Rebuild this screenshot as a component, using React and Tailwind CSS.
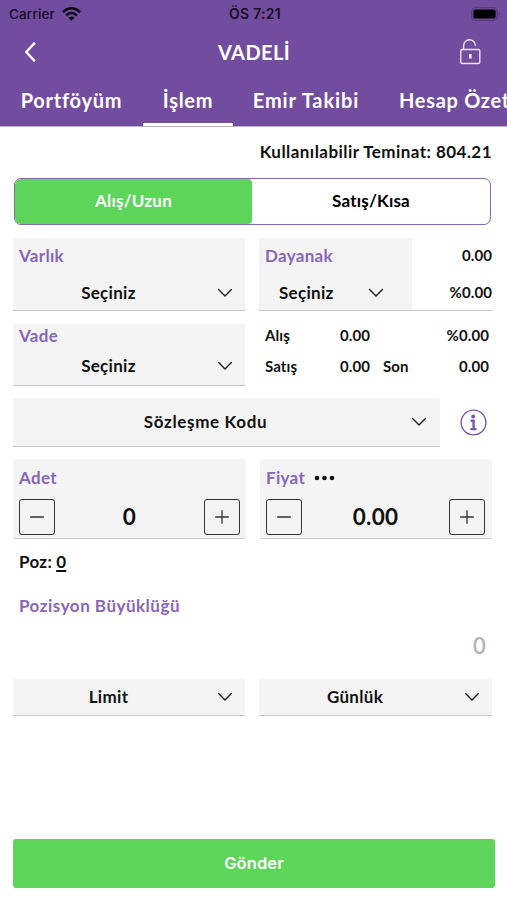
const TABS = [
  { label: 'Portföyüm', box: 'w-[103px] ml-[20px] items-center', tracking: 'tracking-[0.75px]' },
  { label: 'İşlem', box: 'w-[90px] ml-[20px] items-center', tracking: 'tracking-[0.7px]', active: true },
  { label: 'Emir Takibi', box: 'w-[108px] ml-[19px] items-center', tracking: 'tracking-[0.9px]' },
  { label: 'Hesap Özeti', box: 'w-[122px] ml-[39px] items-start', tracking: 'tracking-[0.7px]' },
];

function Chevron({ className = '' }) {
  return (
    <svg className={`h-[10px] w-[16px] shrink-0 ${className}`} viewBox="0 0 16 10" fill="none" stroke="#222" strokeWidth="1.4" strokeLinecap="round" strokeLinejoin="round">
      <path d="M1.6 1.6 8 8.1l6.4-6.5" />
    </svg>
  );
}

function Label({ children, className = '' }) {
  return <div className={`text-[17px] leading-[24px] font-bold whitespace-nowrap text-[#8767b8] ${className}`}>{children}</div>;
}

function Select({ value, className = '' }) {
  return (
    <div className={`flex items-center pr-[12px] ${className}`}>
      <div className="flex-1 pr-[13px] text-center leading-[24px] whitespace-nowrap">{value}</div>
      <Chevron />
    </div>
  );
}

function StepButton({ plus }) {
  return (
    <button className="flex size-[36px] shrink-0 items-center justify-center rounded-[3px] border-[1.5px] border-[#333]">
      <svg className="size-[14px]" viewBox="0 0 14 14" stroke="#333" strokeWidth="1.3" strokeLinecap="round">
        <path d={plus ? 'M.7 7h12.6M7 .7v12.6' : 'M.7 7h12.6'} />
      </svg>
    </button>
  );
}

function Stepper({ label, value, more, className = '' }) {
  return (
    <div className={`flex h-[80px] flex-col rounded-[3px] border-b border-[#c9c9c9] bg-[#f4f4f4] pl-[6px] ${className}`}>
      <div className="flex h-[40px] items-center pb-[2px]">
        <Label>{label}</Label>
        {more && (
          <svg className="ml-[9px] h-[6px] w-[21px]" viewBox="0 0 21 6" fill="#111">
            <circle cx="3" cy="3" r="2.3" />
            <circle cx="10.5" cy="3" r="2.3" />
            <circle cx="18" cy="3" r="2.3" />
          </svg>
        )}
      </div>
      <div className="flex items-center">
        <StepButton />
        <div className="flex-1 text-center text-[22.5px] leading-[28px] font-bold">{value}</div>
        <StepButton plus />
      </div>
    </div>
  );
}

function StatusBar() {
  return (
    <div className="grid h-[28px] grid-cols-3 items-center pr-[6px] pl-[9px] font-['Inter',sans-serif] text-[#180b25]">
      <div className="flex items-center gap-[7px]">
        <span className="text-[13.5px] leading-[18px] font-medium tracking-[0.15px]">Carrier</span>
        <svg className="h-[14px] w-[19px]" viewBox="0 0 19 14" fill="none" stroke="#0d0615" strokeWidth="2.6">
          <path d="M1 5.3C6-.1 13-.1 18 5.3" />
          <path d="M4.2 8.5c3.2-3.3 7.4-3.3 10.6 0" />
          <path d="M9.5 13.8 6.4 10.8c1.8-1.7 4.4-1.7 6.2 0Z" fill="#0d0615" stroke="none" />
        </svg>
      </div>
      <div className="text-center text-[14px] leading-[18px] font-semibold tracking-[0.3px]">ÖS 7:21</div>
      <svg className="h-[14px] w-[30px] justify-self-end" viewBox="0 0 30 14">
        <rect x=".7" y=".7" width="25.6" height="12.6" rx="4" fill="none" stroke="#563b7b" strokeWidth="1.2" />
        <rect x="2.4" y="2.4" width="22.2" height="9.2" rx="2.2" fill="#000" />
        <path d="M27.7 4.8c1.7.8 1.7 3.6 0 4.4Z" fill="#563b7b" />
      </svg>
    </div>
  );
}

export default function App() {
  return (
    <div className="flex h-[900px] w-[507px] flex-col overflow-hidden bg-white font-['Lato',sans-serif] font-bold text-[#111]">
      <header className="h-[127px] shrink-0 border-b border-[#b9b0c4] bg-[#724c9f] text-white">
        <StatusBar />
        <div className="flex h-[48px] items-center justify-between pr-[26px] pl-[24px]">
          <svg className="h-[20px] w-[23px]" viewBox="0 0 23 20" fill="none" stroke="#fff" strokeWidth="2.3" strokeLinecap="round" strokeLinejoin="round">
            <path d="M10.2 1.4 2.3 10l7.9 8.6" />
          </svg>
          <h1 className="pl-[2px] text-[20px] leading-[28px] tracking-[0.4px]">VADELİ</h1>
          <svg className="-mt-[1px] h-[27px] w-[22px]" viewBox="0 0 22 27" fill="none" stroke="#eee2f8" strokeWidth="1.4">
            <rect x="1.8" y="11.5" width="19" height="14" rx="1.2" />
            <path d="M4.6 11.2V8C4.6 4.3 7.4 1.7 10.4 1.7s5.8 2.4 6 6" />
            <path d="M11.3 16v4.6" strokeWidth="2.6" />
          </svg>
        </div>
        <nav className="flex h-[50px] overflow-hidden">
          {TABS.map((t) => (
            <div key={t.label} className={`flex shrink-0 flex-col whitespace-nowrap ${t.box}`}>
              <span className={`pt-[10px] text-[20px] leading-[28px] ${t.tracking}`}>{t.label}</span>
              {t.active && <span className="mt-auto h-[3px] w-full bg-white" />}
            </div>
          ))}
        </nav>
      </header>

      <main className="flex flex-col px-[13px] text-[17px] tracking-[0.3px]">
        <div className="mt-[13px] self-end pr-[2px] leading-[24px] tracking-[0.45px]">Kullanılabilir Teminat: 804.21</div>

        <div className="mt-[14px] ml-[1px] flex h-[47px] w-[477px] overflow-hidden rounded-[7px] border-[1.5px] border-[#8268b0] tracking-[0.2px]">
          <div className="flex w-[237px] items-center justify-center rounded-[4px] bg-[#5dd55b] pb-[2px] text-white">Alış/Uzun</div>
          <div className="flex flex-1 items-center justify-center pb-[2px] text-black">Satış/Kısa</div>
        </div>

        <div className="mt-[13px] flex gap-[14px]">
          <div className="h-[73px] w-[232px] border-b-[1.5px] border-[#c9c9c9] bg-[#f4f4f4]">
            <Label className="pt-[6px] pl-[6px]">Varlık</Label>
            <Select value="Seçiniz" className="mt-[13px]" />
          </div>
          <div className="flex h-[73px] w-[233px] border-b-[1.5px] border-[#c9c9c9]">
            <div className="w-[153px] bg-[#f4f4f4]">
              <Label className="pt-[6px] pl-[6px]">Dayanak</Label>
              <div className="mt-[13px] flex items-center pl-[20px] leading-[24px]">
                <div className="w-[56px] whitespace-nowrap">Seçiniz</div>
                <Chevron className="ml-[33px]" />
              </div>
            </div>
            <div className="flex flex-1 flex-col items-end pt-[5px] text-[15px] leading-[24px] tracking-[0.1px]">
              <span>0.00</span>
              <span className="mt-[13px]">%0.00</span>
            </div>
          </div>
        </div>

        <div className="mt-[13px] flex gap-[14px]">
          <div className="h-[62px] w-[232px] border-b-[1.5px] border-[#c9c9c9] bg-[#f4f4f4]">
            <Label className="pl-[6px]">Vade</Label>
            <Select value="Seçiniz" className="mt-[6px]" />
          </div>
          <div className="-mt-px flex w-[233px] flex-col gap-[7px] pr-[3px] pl-[6px] text-[15px] leading-[24px] tracking-[0.1px]">
            <div className="flex">
              <span className="w-[60px]">Alış</span>
              <span className="w-[45px] text-right">0.00</span>
              <span className="flex-1 text-right">%0.00</span>
            </div>
            <div className="flex">
              <span className="w-[60px]">Satış</span>
              <span className="w-[45px] text-right">0.00</span>
              <span className="ml-[13px]">Son</span>
              <span className="flex-1 text-right">0.00</span>
            </div>
          </div>
        </div>

        <div className="mt-[12px] flex items-center">
          <Select value="Sözleşme Kodu" className="h-[49px] w-[427px] rounded-t-[2px] border-b-[1.5px] border-[#c9c9c9] bg-[#f4f4f4] pr-[13px] tracking-[0.65px]" />
          <svg className="ml-[20px] size-[27px]" viewBox="0 0 27 27" fill="none" stroke="#7c58ad">
            <circle cx="13.5" cy="13.5" r="12.4" strokeWidth="1.4" />
            <circle cx="13.2" cy="7.4" r="2" fill="#7c58ad" stroke="none" />
            <path d="M10.6 11.8h3v8M10.4 20.1h6.2" strokeWidth="2.4" />
          </svg>
        </div>

        <div className="mt-[12px] flex">
          <Stepper label="Adet" value="0" className="w-[233px] pr-[6px]" />
          <Stepper label="Fiyat" value="0.00" more className="ml-[14px] w-[232px] pr-[7px]" />
        </div>

        <div className="mt-[11px] flex gap-[4px] pl-[6px] leading-[24px]">
          <span>Poz:</span>
          <span className="underline decoration-2 underline-offset-2">0</span>
        </div>
        <Label className="mt-[20px] pl-[6px] tracking-[0.5px]">Pozisyon Büyüklüğü</Label>
        <div className="mt-[14px] self-end pr-[8px] text-[22px] leading-[28px] font-semibold text-[#b4b4b4]">0</div>

        <div className="mt-[19px] flex gap-[14px]">
          <Select value="Limit" className="h-[37px] w-[232px] rounded-t-[2px] border-b-[1.5px] border-[#c9c9c9] bg-[#f4f4f4]" />
          <Select value="Günlük" className="h-[37px] w-[233px] rounded-t-[2px] border-b-[1.5px] border-[#c9c9c9] bg-[#f4f4f4]" />
        </div>

        <button className="mt-[123px] flex h-[49px] w-[482px] items-center justify-center rounded-[3px] bg-[#5dd55b] font-['Inter',sans-serif] text-[16.5px] font-semibold tracking-[0.1px] text-white">Gönder</button>
      </main>
    </div>
  );
}
